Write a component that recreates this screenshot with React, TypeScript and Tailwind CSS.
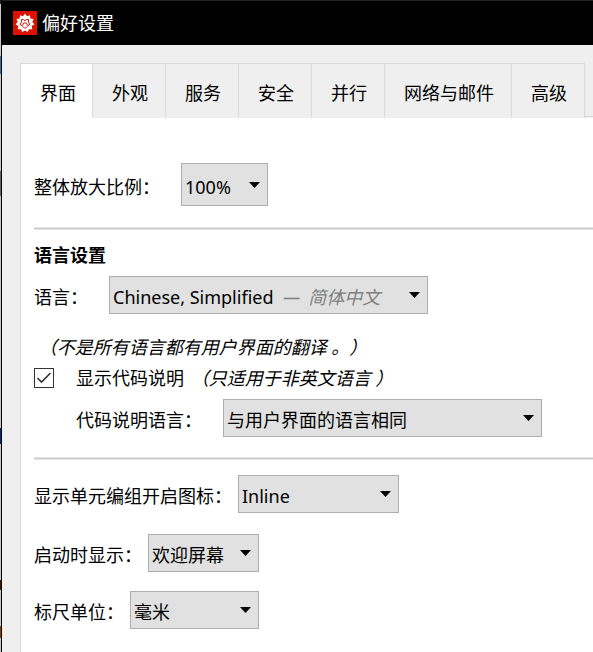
import { useState } from 'react';
import clsx from 'clsx';

const tabs = ['界面', '外观', '服务', '安全', '并行', '网络与邮件', '高级'];

type SelectProps = {
  id: string;
  options: string[];
  className: string;
  hint?: string;
};

const Select = ({ id, options, className, hint }: SelectProps) => {
  return (
    <div className={clsx('relative shrink-0', className)}>
      <select
        id={id}
        className="block h-full w-full appearance-none border border-[#adadad] bg-[#e1e1e1] pl-[3px] pt-1 pr-6 text-black outline-none"
      >
        {options.map((option) => (
          <option key={option}>{option}</option>
        ))}
      </select>
      {hint && (
        <span className="pointer-events-none absolute inset-y-0 left-[174px] flex items-center gap-2 pt-1 italic text-[#808080]">
          <span>—</span>
          <span>{hint}</span>
        </span>
      )}
      <svg
        viewBox="0 0 11 6"
        className="pointer-events-none absolute inset-y-0 right-2 my-auto h-[6px] w-[11px]"
        aria-hidden="true"
      >
        <path d="M0 0h11L5.5 6z" fill="#000" />
      </svg>
    </div>
  );
};

const Logo = () => {
  return (
    <svg viewBox="0 0 24 24" className="size-6 shrink-0" aria-hidden="true">
      <rect width="24" height="24" fill="#dd1100" />
      <path
        d="M12 2.500L14 5.300L17 4.200L17.300 7.500L20.600 8.100L19.300 11L21.400 13.300L18.700 15.100L19.200 18.200L16 18.200L14.700 21.100L12 19.400L9.300 21.100L8 18.200L4.800 18.200L5.300 15.100L2.600 13.300L4.700 11L3.400 8.100L6.700 7.500L7 4.200L10 5.300Z"
        fill="#fff"
      />
      <path
        d="M8.500 8.500h2l1.500 1.200 1.500-1.200h2v3l1.700 1.500-3.700 3-1.500 1.500-1.500-1.500-3.700-3 1.700-1.500zM9.500 14.500l1-2.500h3l1 2.500"
        fill="none"
        stroke="#dd1100"
        strokeWidth="1"
      />
    </svg>
  );
};

// slivers of the window behind, down the left edge
const Backdrop = () => {
  return (
    <div className="flex w-px flex-col bg-[#c8c8c8]" aria-hidden="true">
      <div className="h-1 bg-[#222]" />
      <div className="mt-[52px] h-[18px] bg-[#3a6ea5]" />
      <div className="mt-[97px] h-[25px] bg-[#666]" />
      <div className="mt-[232px] h-4 bg-[#002a80]" />
      <div className="mt-[136px] h-[10px] bg-[#4a1a00]" />
      <div className="mt-[36px] h-3 bg-[#8a4000]" />
    </div>
  );
};

const App = () => {
  const [active, setActive] = useState(tabs[0]);
  const [showCaptions, setShowCaptions] = useState(true);

  return (
    <div className="flex min-h-screen overflow-hidden font-['Noto_Sans','Noto_Sans_CJK_SC',sans-serif] text-[18px] leading-6 text-black [text-spacing-trim:space-all]">
      <Backdrop />
      <div className="flex min-w-0 flex-1 flex-col border-l border-black bg-[#efefef]">
        <header className="flex h-[45px] items-center gap-[5px] border-t border-[#222] bg-black pl-[11px] text-white">
          <Logo />
          <h1>偏好设置</h1>
        </header>

        <div className="flex flex-1 flex-col pl-[18px] pt-[18px]">
          <div role="tablist" className="flex">
            {tabs.map((tab) => (
              <button
                key={tab}
                type="button"
                role="tab"
                aria-selected={tab === active}
                onClick={() => setActive(tab)}
                className={clsx(
                  'h-[55px] shrink-0 border-t border-r border-[#d9d9d9] pl-[19px] pr-[17px] pt-1 first:border-l first:pr-4',
                  tab === active && 'bg-white',
                )}
              >
                {tab}
              </button>
            ))}
            <div className="mb-px flex-1 border-b border-[#d9d9d9]" />
          </div>

          <main className="flex-1 border-l border-[#d9d9d9] bg-white pl-[13px] pt-[45px]">
            <div className="flex items-center">
              <label htmlFor="zoom" className="mr-[21px] pt-1">
                整体放大比例：
              </label>
              <Select id="zoom" className="h-[43px] w-[87px]" options={['100%', '125%', '150%']} />
            </div>

            <hr className="mt-[21px] h-[3px] border-y border-[#e6e6e6] bg-[#c8c8c8]" />

            <h2 className="mt-[13px] font-bold">语言设置</h2>
            <div className="mt-[9px] flex items-center">
              <label htmlFor="language" className="mr-[21px] pt-1">
                语言：
              </label>
              <Select
                id="language"
                className="h-[38px] w-[319px]"
                options={['Chinese, Simplified', 'English']}
                hint="简体中文"
              />
            </div>
            <p className="mt-[21px] whitespace-pre italic"> （不是所有语言都有用户界面的翻译 。）</p>

            <div className="mt-[7px] flex items-center">
              <span className="relative flex size-5 shrink-0">
                <input
                  id="captions"
                  type="checkbox"
                  checked={showCaptions}
                  onChange={(e) => setShowCaptions(e.target.checked)}
                  className="size-5 appearance-none border border-[#333] bg-white"
                />
                {showCaptions && (
                  <svg
                    viewBox="0 0 20 20"
                    className="pointer-events-none absolute inset-0 size-5"
                    aria-hidden="true"
                  >
                    <path d="M3.500 10l4 4 9-9" fill="none" stroke="#333" strokeWidth="1.600" />
                  </svg>
                )}
              </span>
              <label htmlFor="captions" className="ml-[22px] whitespace-pre">
                显示代码说明 <i className="pl-[2px]">（只适用于非英文语言 ）</i>
              </label>
            </div>

            <div className="mt-[9px] flex items-center pl-[42px]">
              <label htmlFor="caption-language" className="mr-[21px] pt-1">
                代码说明语言：
              </label>
              <Select
                id="caption-language"
                className="h-[38px] w-[319px]"
                options={['与用户界面的语言相同', 'English']}
              />
            </div>

            <hr className="mt-5 h-[3px] border-y border-[#e6e6e6] bg-[#c8c8c8]" />

            <div className="mt-[15px] flex items-center">
              <label htmlFor="group-opener" className="mr-[6px] pt-1">
                显示单元编组开启图标：
              </label>
              <Select id="group-opener" className="h-[38px] w-[161px]" options={['Inline', 'Outside']} />
            </div>
            <div className="mt-[21px] flex items-center">
              <label htmlFor="startup" className="mr-[6px] pt-1">
                启动时显示：
              </label>
              <Select id="startup" className="h-[38px] w-[111px]" options={['欢迎屏幕', '新文档']} />
            </div>
            <div className="mt-[19px] flex items-center">
              <label htmlFor="ruler" className="mr-[6px] pt-1">
                标尺单位：
              </label>
              <Select id="ruler" className="h-[38px] w-[129px]" options={['毫米', '厘米', '英寸']} />
            </div>
          </main>
        </div>
      </div>
    </div>
  );
};

export default App;
